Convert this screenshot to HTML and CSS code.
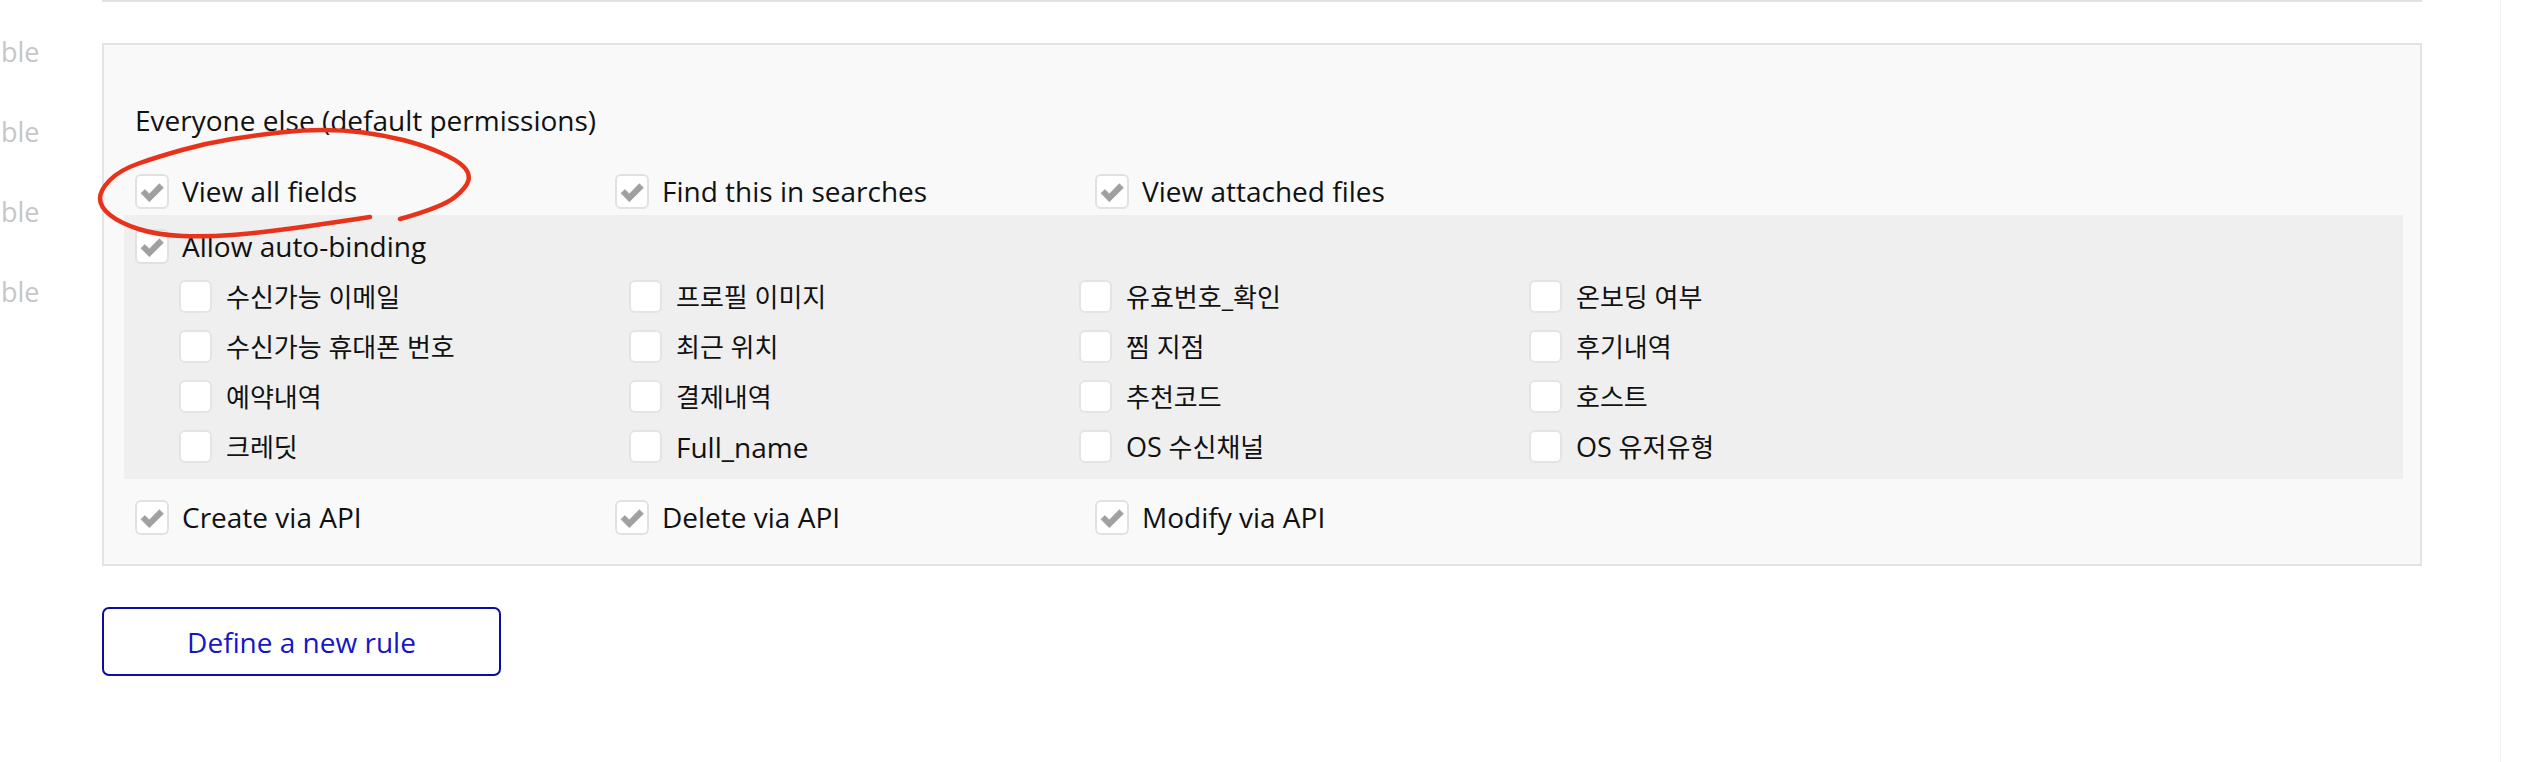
FILE: index.html
```html
<!DOCTYPE html>
<html>
<head>
<meta charset="utf-8">
<link rel="stylesheet" href="styles.css">
</head>
<body>
<div class="page">
  <div class="side">
    <div class="side-label">ble</div>
    <div class="side-label">ble</div>
    <div class="side-label">ble</div>
    <div class="side-label">ble</div>
  </div>
  <div class="main">
    <div class="prev-panel"></div>
    <div class="panel">
      <div class="title">Everyone else (default permissions)</div>
      <div class="row3 first">
        <label class="opt"><span class="cb checked"><svg viewBox="0 0 34 34"><polygon points="4.5,19.5 9,15.3 14,20.3 25.3,8.8 30,13.3 14,29.2"/></svg></span><span class="lbl">View all fields</span></label>
        <label class="opt"><span class="cb checked"><svg viewBox="0 0 34 34"><polygon points="4.5,19.5 9,15.3 14,20.3 25.3,8.8 30,13.3 14,29.2"/></svg></span><span class="lbl">Find this in searches</span></label>
        <label class="opt"><span class="cb checked"><svg viewBox="0 0 34 34"><polygon points="4.5,19.5 9,15.3 14,20.3 25.3,8.8 30,13.3 14,29.2"/></svg></span><span class="lbl">View attached files</span></label>
      </div>
      <div class="binding">
        <label class="opt"><span class="cb checked"><svg viewBox="0 0 34 34"><polygon points="4.5,19.5 9,15.3 14,20.3 25.3,8.8 30,13.3 14,29.2"/></svg></span><span class="lbl">Allow auto-binding</span></label>
        <div class="fields">
          <label class="opt"><span class="cb small"></span><span class="lbl ko">수신가능 이메일</span></label>
          <label class="opt"><span class="cb small"></span><span class="lbl ko">프로필 이미지</span></label>
          <label class="opt"><span class="cb small"></span><span class="lbl ko">유효번호_확인</span></label>
          <label class="opt"><span class="cb small"></span><span class="lbl ko">온보딩 여부</span></label>
          <label class="opt"><span class="cb small"></span><span class="lbl ko">수신가능 휴대폰 번호</span></label>
          <label class="opt"><span class="cb small"></span><span class="lbl ko">최근 위치</span></label>
          <label class="opt"><span class="cb small"></span><span class="lbl ko">찜 지점</span></label>
          <label class="opt"><span class="cb small"></span><span class="lbl ko">후기내역</span></label>
          <label class="opt"><span class="cb small"></span><span class="lbl ko">예약내역</span></label>
          <label class="opt"><span class="cb small"></span><span class="lbl ko">결제내역</span></label>
          <label class="opt"><span class="cb small"></span><span class="lbl ko">추천코드</span></label>
          <label class="opt"><span class="cb small"></span><span class="lbl ko">호스트</span></label>
          <label class="opt"><span class="cb small"></span><span class="lbl ko">크레딧</span></label>
          <label class="opt"><span class="cb small"></span><span class="lbl">Full_name</span></label>
          <label class="opt"><span class="cb small"></span><span class="lbl ko"><span class="en">OS</span> 수신채널</span></label>
          <label class="opt"><span class="cb small"></span><span class="lbl ko"><span class="en">OS</span> 유저유형</span></label>
        </div>
      </div>
      <div class="row3 last">
        <label class="opt"><span class="cb checked"><svg viewBox="0 0 34 34"><polygon points="4.5,19.5 9,15.3 14,20.3 25.3,8.8 30,13.3 14,29.2"/></svg></span><span class="lbl">Create via API</span></label>
        <label class="opt"><span class="cb checked"><svg viewBox="0 0 34 34"><polygon points="4.5,19.5 9,15.3 14,20.3 25.3,8.8 30,13.3 14,29.2"/></svg></span><span class="lbl">Delete via API</span></label>
        <label class="opt"><span class="cb checked"><svg viewBox="0 0 34 34"><polygon points="4.5,19.5 9,15.3 14,20.3 25.3,8.8 30,13.3 14,29.2"/></svg></span><span class="lbl">Modify via API</span></label>
      </div>
    </div>
    <button class="new-rule">Define a new rule</button>
  </div>
  <div class="gutter"></div>
  <div class="edge"></div>
  <svg class="annotation" viewBox="0 0 2544 762" width="2544" height="762">
    <path d="M400,219 Q443,207 455,197 Q467,187 468.5,180 Q470,173 463.5,166.5 Q457,160 440,152.5 Q423,145 403,140 Q383,135 363,132.5 Q343,130 323,130 Q303,130 280,132.5 Q257,135 232,139 Q207,143 182,150 Q157,157 138.5,163.5 Q120,170 110,180 Q100,190 100,198.5 Q100,207 110,215 Q120,223 138.5,229 Q157,235 182,236 Q207,237 232,235 Q257,233 287,229 Q317,225 370,217"/>
  </svg>
</div>
</body>
</html>
```

FILE: styles.css
```css
html, body {
  margin: 0;
  padding: 0;
  background: #ffffff;
}

body {
  font-family: "Open Sans", "Noto Sans CJK KR", sans-serif;
  font-size: 28px;
  color: #111111;
}

.page {
  position: relative;
  display: flex;
  width: 2544px;
  height: 762px;
  overflow: hidden;
}

.side {
  width: 102px;
  flex: none;
  padding-top: 12px;
  overflow: hidden;
}

.side-label {
  height: 80px;
  line-height: 80px;
  padding-left: 1px;
  font-size: 27px;
  color: #c6c6c6;
}

.main {
  width: 2320px;
  flex: none;
}

.prev-panel {
  height: 2px;
  background: #e2e2e2;
}

.panel {
  margin-top: 41px;
  border: 2px solid #e3e3e3;
  background: #f9f9f9;
  padding: 57px 17px 30px 20px;
}

.title {
  line-height: 36px;
  padding-left: 11px;
  margin-bottom: 35px;
}

.row3 {
  display: grid;
  grid-template-columns: 480px 480px 480px;
  padding-left: 11px;
  height: 35px;
  align-items: center;
}

.opt {
  display: flex;
  align-items: center;
  gap: 13px;
  line-height: 36px;
  white-space: nowrap;
}

.lbl.ko {
  font-size: 26px;
}

.lbl.ko .en {
  font-size: 27px;
}

.cb {
  flex: none;
  box-sizing: border-box;
  width: 34px;
  height: 35px;
  border: 2px solid #e1e1e1;
  border-radius: 6px;
  background: #ffffff;
  display: flex;
  align-items: center;
  justify-content: center;
}

.cb svg {
  width: 34px;
  height: 34px;
  fill: #a0a0a0;
  stroke: #a0a0a0;
  stroke-width: 0.8;
  stroke-linejoin: round;
}

.cb.small {
  width: 33px;
  height: 33px;
  border-color: #e4e4e4;
}

.binding {
  margin-top: 7px;
  background: #efefef;
  padding: 14px 0 16px 11px;
}

.binding > .opt {
  height: 34px;
}

.fields {
  display: grid;
  grid-template-columns: 450px 450px 450px 450px;
  grid-auto-rows: 33px;
  row-gap: 17px;
  margin-top: 17px;
  margin-left: 44px;
}

.fields .opt {
  gap: 14px;
}

.row3.last {
  margin-top: 20px;
}

.new-rule {
  display: block;
  margin-top: 41px;
  width: 399px;
  height: 69px;
  border: 2px solid #0c0ca3;
  border-radius: 7px;
  background: #ffffff;
  color: #1616c4;
  font-family: "Open Sans", sans-serif;
  font-size: 28px;
  padding: 0;
}

.gutter {
  width: 78px;
  flex: none;
}

.edge {
  width: 0;
  flex: none;
  border-left: 1px solid #f0f0f2;
}

.annotation {
  position: absolute;
  left: 0;
  top: 0;
  pointer-events: none;
}

.annotation path {
  fill: none;
  stroke: #e8321a;
  stroke-width: 4.5;
  stroke-linecap: round;
  stroke-linejoin: round;
}
```
